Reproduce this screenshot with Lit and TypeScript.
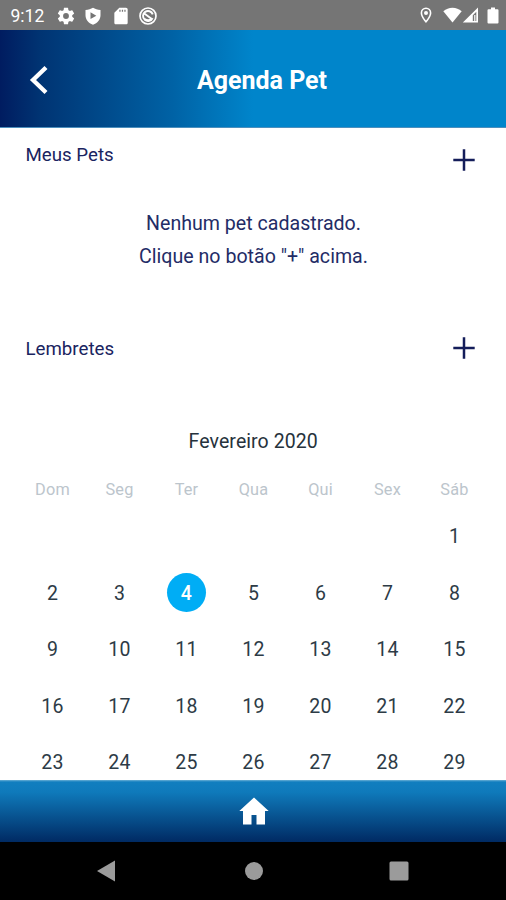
import { LitElement, html, css } from "lit";
import { customElement } from "lit/decorators.js";
import { classMap } from "lit/directives/class-map.js";

const WEEKDAYS = ["Dom", "Seg", "Ter", "Qua", "Qui", "Sex", "Sáb"];
const FIRST_WEEKDAY = 6;
const DAYS = 29;
const TODAY = 4;

@customElement("status-bar")
class StatusBar extends LitElement {
  static styles = css`
    :host { display: flex; align-items: center; height: 30px; background: #757575; color: #fff; padding: 0 3.5px 0 10.5px; box-sizing: border-box; }
    svg { display: block; fill: #fff; }
    .time { font-size: 17.5px; line-height: 30px; width: 45.5px; padding-top: 2px; }
    .left { display: flex; align-items: center; gap: 7.3px; flex: 1; padding-top: 1px; }
    .right { display: flex; align-items: center; }
    .pin { margin-right: 11.5px; }
    .signal { margin: 0 3.5px 0 0; }
  `;
  render() {
    return html`
      <span class="time">9:12</span>
      <div class="left">
        <svg width="20" height="20" viewBox="0 0 24 24"><path d="M19.43 12.98c.04-.32.07-.64.07-.98s-.03-.66-.07-.98l2.11-1.65c.19-.15.24-.42.12-.64l-2-3.46c-.12-.22-.39-.3-.61-.22l-2.49 1c-.52-.4-1.08-.73-1.69-.98l-.38-2.65A.488.488 0 0 0 14 2h-4c-.25 0-.46.18-.49.42l-.38 2.65c-.61.25-1.17.59-1.69.98l-2.49-1c-.23-.09-.49 0-.61.22l-2 3.46c-.13.22-.07.49.12.64l2.11 1.65c-.04.32-.07.65-.07.98s.03.66.07.98l-2.11 1.65c-.19.15-.24.42-.12.64l2 3.46c.12.22.39.3.61.22l2.49-1c.52.4 1.08.73 1.69.98l.38 2.65c.03.24.24.42.49.42h4c.25 0 .46-.18.49-.42l.38-2.65c.61-.25 1.17-.59 1.69-.98l2.49 1c.23.09.49 0 .61-.22l2-3.46c.12-.22.07-.49-.12-.64l-2.11-1.65zM12 15.5a3.5 3.5 0 1 1 0-7 3.5 3.5 0 0 1 0 7z"/></svg>
        <svg width="20" height="20" viewBox="0 0 24 24"><path fill-rule="evenodd" d="M12 2C9.500 3.500 6.500 4.500 3 4.700V11c0 5.300 3.600 9.300 9 11.400 5.400-2.100 9-6.100 9-11.400V4.700C17.500 4.500 14.500 3.500 12 2zM9 7.600v8l7-4z"/></svg>
        <svg width="20" height="20" viewBox="0 0 24 24"><path fill-rule="evenodd" d="M18 2h-8L4 8v12c0 1.100.9 2 2 2h12c1.100 0 2-.9 2-2V4c0-1.100-.9-2-2-2zM10 4.500h1.500v2.500H10zM13 4.500h1.500v2.500H13zM16 4.500h1.500v2.500H16z"/></svg>
        <svg width="20" height="20" viewBox="0 0 24 24"><g fill="none" stroke="#fff"><circle cx="12" cy="12" r="9.600" stroke-width="2"/><path d="M17.500 14.500A6 6 0 1 1 17.700 10M8 9.300l8.500 6.200" stroke-width="2.300"/><path d="M8 15.500q4 3.200 8.500 0" stroke-width="2.300"/></g></svg>
      </div>
      <div class="right">
        <svg class="pin" width="12" height="17" viewBox="0 0 12 17"><path fill-rule="evenodd" d="M6 .5A5.400 5.400 0 0 0 .6 5.900C.6 10 6 16 6 16s5.400-6 5.400-10.100A5.400 5.400 0 0 0 6 .5zm0 1.600a3.800 3.800 0 0 1 3.800 3.800c0 2.400-2.200 5.600-3.800 7.600-1.600-2-3.800-5.200-3.800-7.600A3.800 3.800 0 0 1 6 2.100z"/><circle cx="6" cy="5.900" r="2"/></svg>
        <svg width="19" height="16" viewBox="0 0 19 16"><path d="M9.500 15.500.3 4.200C3 2 6 .8 9.500.8s6.500 1.200 9.200 3.400z"/></svg>
        <svg class="signal" width="17" height="16" viewBox="0 0 17 16"><path fill-rule="evenodd" d="M16 .500V15.500H.8zM14.300 4.800 10.800 8.300V14h3.500z"/><path d="M12.200 8h1.200v6h-1.200z"/></svg>
        <svg width="20" height="17" viewBox="0 0 20 17"><path d="M8 .5h4v1.700h2.500q1 0 1 1V15.500q0 1-1 1h-9q-1 0-1-1V3.200q0-1 1-1H8z"/></svg>
      </div>
    `;
  }
}

@customElement("section-heading")
class SectionHeading extends LitElement {
  static properties = { label: {} };
  declare label: string;
  static styles = css`
    :host { display: flex; justify-content: space-between; padding: 0 31px 0 25.5px; color: #1a2460; }
    .label { font-size: 18.7px; line-height: 24px; }
    svg { display: block; margin-top: var(--plus-offset, 0); }
  `;
  render() {
    return html`<span class="label">${this.label}</span>
      <svg width="22" height="22" viewBox="0 0 22 22"><path d="M11 .3v21.400M.3 11h21.400" stroke="#141d5a" stroke-width="2.500"/></svg>`;
  }
}

@customElement("month-calendar")
class MonthCalendar extends LitElement {
  static styles = css`
    :host { display: block; padding: 0 18.5px 0 19px; color: #2d3b46; }
    .month { text-align: center; font-size: 19.5px; line-height: 24px; letter-spacing: 0.08px; color: #26323c; }
    .grid { display: grid; grid-template-columns: repeat(7, 67px); justify-items: center; }
    .names { margin-top: 25px; font-size: 16.3px; line-height: 22px; letter-spacing: 0.2px; color: #bcc5cc; }
    .days { margin-top: 7px; grid-auto-rows: 56.5px; align-items: center; font-size: 19.5px; letter-spacing: 0.25px; }
    .day { width: 39px; height: 39px; line-height: 41px; text-align: center; border-radius: 50%; }
    .today { background: #00adf5; color: #fff; font-weight: 500; }
    .first { grid-column: 7; }
  `;
  render() {
    return html`
      <div class="month">Fevereiro 2020</div>
      <div class="grid names">${WEEKDAYS.map((d) => html`<span>${d}</span>`)}</div>
      <div class="grid days">
        ${Array.from({ length: DAYS }, (_, i) => i + 1).map((n) => html`<span
          class=${classMap({ day: true, today: n === TODAY, first: n === 1 && FIRST_WEEKDAY === 6 })}>${n}</span>`)}
      </div>
    `;
  }
}

@customElement("app-root")
class AppRoot extends LitElement {
  static styles = css`
    :host { display: flex; flex-direction: column; width: 506px; height: 900px; overflow: hidden; background: #fff; font-family: Roboto, "Liberation Sans", sans-serif; }
    header { display: grid; grid-template-columns: 58px 1fr 40px; align-items: center; height: 98px; flex: none; box-sizing: border-box; border-bottom: 1px solid #4c8fbd; background: linear-gradient(90deg, #001c60 0%, #003473 8%, #0062a5 34%, #0085cb 50%, #0085cb 100%); color: #fff; }
    header svg { display: block; margin: 2px 0 0 29px; }
    h1 { margin: 5px 0 0; text-align: center; font-size: 25px; line-height: 32px; font-weight: 700; }
    main { flex: 1; min-height: 0; overflow: hidden; }
    .pets { margin-top: 15px; --plus-offset: 6px; }
    .empty { margin: 36px 0 0; padding-left: 1px; text-align: center; font-size: 19.6px; line-height: 33px; color: #232c66; }
    .reminders { margin-top: 64px; --plus-offset: 0px; }
    month-calendar { margin-top: 68.5px; }
    .tabs { display: flex; justify-content: center; align-items: center; height: 62px; flex: none; padding-left: 1.5px; background: linear-gradient(180deg, #69afd5 0, #117ebf 2px, #0f7abb 12px, #002a63 100%); }
    .system { display: grid; grid-template-columns: 1fr 76px 1fr; align-items: center; height: 58px; flex: none; background: #000; }
    .system svg { display: block; fill: #9b9b9b; justify-self: center; }
    .system .back { margin-right: 3px; }
    .system .home { margin-left: 1px; }
  `;
  render() {
    return html`
      <status-bar></status-bar>
      <header>
        <svg width="20" height="30" viewBox="0 0 20 30"><path d="M17 2.500 4 15l13 12.500" fill="none" stroke="#fff" stroke-width="4.300"/></svg>
        <h1>Agenda Pet</h1>
      </header>
      <main>
        <section-heading class="pets" label="Meus Pets"></section-heading>
        <p class="empty">Nenhum pet cadastrado.<br />Clique no botão "+" acima.</p>
        <section-heading class="reminders" label="Lembretes"></section-heading>
        <month-calendar></month-calendar>
      </main>
      <nav class="tabs">
        <svg width="30" height="28" viewBox="0 0 30 28"><path d="M15 .5.300 14H4v13.500h8.500v-9.500h5v9.500H26V14h3.700z" fill="#fff"/></svg>
      </nav>
      <footer class="system">
        <svg class="back" width="18" height="22" viewBox="0 0 18 22"><path d="M18 .500v21L0 11z"/></svg>
        <svg class="home" width="18" height="18" viewBox="0 0 18 18"><circle cx="9" cy="9" r="9"/></svg>
        <svg width="20" height="20" viewBox="0 0 20 20"><rect x=".5" y=".5" width="19" height="19" rx="1.500"/></svg>
      </footer>
    `;
  }
}
